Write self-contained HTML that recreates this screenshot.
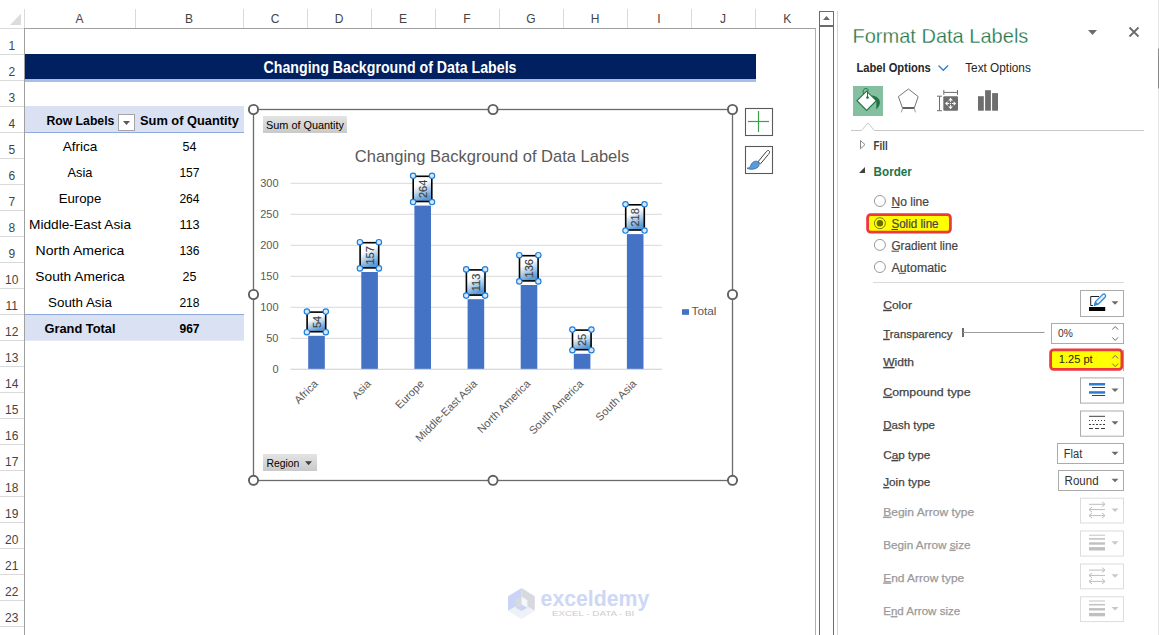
<!DOCTYPE html><html><head><meta charset="utf-8"><style>html,body{margin:0;padding:0;background:#fff;width:1159px;height:635px;overflow:hidden}svg{display:block}text{font-family:"Liberation Sans",sans-serif}</style></head><body>
<svg width="1159" height="635" viewBox="0 0 1159 635">
<rect width="1159" height="635" fill="#fff"/>
<polygon points="10,25 21,13.5 21,25" fill="#dcdcdc"/>
<line x1="135.5" y1="9" x2="135.5" y2="28" stroke="#dadada" stroke-width="1"/>
<line x1="243.5" y1="9" x2="243.5" y2="28" stroke="#dadada" stroke-width="1"/>
<line x1="307.5" y1="9" x2="307.5" y2="28" stroke="#dadada" stroke-width="1"/>
<line x1="371.5" y1="9" x2="371.5" y2="28" stroke="#dadada" stroke-width="1"/>
<line x1="435.5" y1="9" x2="435.5" y2="28" stroke="#dadada" stroke-width="1"/>
<line x1="499.5" y1="9" x2="499.5" y2="28" stroke="#dadada" stroke-width="1"/>
<line x1="563.5" y1="9" x2="563.5" y2="28" stroke="#dadada" stroke-width="1"/>
<line x1="627.5" y1="9" x2="627.5" y2="28" stroke="#dadada" stroke-width="1"/>
<line x1="691.5" y1="9" x2="691.5" y2="28" stroke="#dadada" stroke-width="1"/>
<line x1="755.5" y1="9" x2="755.5" y2="28" stroke="#dadada" stroke-width="1"/>
<text x="79.5" y="23.4" font-size="12" fill="#444" text-anchor="middle">A</text>
<text x="189.0" y="23.4" font-size="12" fill="#444" text-anchor="middle">B</text>
<text x="275.0" y="23.4" font-size="12" fill="#444" text-anchor="middle">C</text>
<text x="339.0" y="23.4" font-size="12" fill="#444" text-anchor="middle">D</text>
<text x="403.0" y="23.4" font-size="12" fill="#444" text-anchor="middle">E</text>
<text x="467.0" y="23.4" font-size="12" fill="#444" text-anchor="middle">F</text>
<text x="531.0" y="23.4" font-size="12" fill="#444" text-anchor="middle">G</text>
<text x="595.0" y="23.4" font-size="12" fill="#444" text-anchor="middle">H</text>
<text x="659.0" y="23.4" font-size="12" fill="#444" text-anchor="middle">I</text>
<text x="723.0" y="23.4" font-size="12" fill="#444" text-anchor="middle">J</text>
<text x="787.3" y="23.4" font-size="12" fill="#444" text-anchor="middle">K</text>
<line x1="0" y1="28.5" x2="24" y2="28.5" stroke="#dadada"/>
<line x1="24" y1="28.5" x2="816" y2="28.5" stroke="#a0a0a0"/>
<line x1="24.5" y1="9" x2="24.5" y2="28" stroke="#dadada"/>
<line x1="24.5" y1="28" x2="24.5" y2="635" stroke="#a0a0a0"/>
<line x1="815.5" y1="28" x2="815.5" y2="635" stroke="#b0b0b0"/>
<line x1="0" y1="54.5" x2="24" y2="54.5" stroke="#dadada"/>
<text x="11.8" y="50" font-size="12" fill="#444" text-anchor="middle">1</text>
<line x1="0" y1="80.5" x2="24" y2="80.5" stroke="#dadada"/>
<text x="11.8" y="76" font-size="12" fill="#444" text-anchor="middle">2</text>
<line x1="0" y1="106.5" x2="24" y2="106.5" stroke="#dadada"/>
<text x="11.8" y="102" font-size="12" fill="#444" text-anchor="middle">3</text>
<line x1="0" y1="132.5" x2="24" y2="132.5" stroke="#dadada"/>
<text x="11.8" y="128" font-size="12" fill="#444" text-anchor="middle">4</text>
<line x1="0" y1="158.5" x2="24" y2="158.5" stroke="#dadada"/>
<text x="11.8" y="154" font-size="12" fill="#444" text-anchor="middle">5</text>
<line x1="0" y1="184.5" x2="24" y2="184.5" stroke="#dadada"/>
<text x="11.8" y="180" font-size="12" fill="#444" text-anchor="middle">6</text>
<line x1="0" y1="210.5" x2="24" y2="210.5" stroke="#dadada"/>
<text x="11.8" y="206" font-size="12" fill="#444" text-anchor="middle">7</text>
<line x1="0" y1="236.5" x2="24" y2="236.5" stroke="#dadada"/>
<text x="11.8" y="232" font-size="12" fill="#444" text-anchor="middle">8</text>
<line x1="0" y1="262.5" x2="24" y2="262.5" stroke="#dadada"/>
<text x="11.8" y="258" font-size="12" fill="#444" text-anchor="middle">9</text>
<line x1="0" y1="288.5" x2="24" y2="288.5" stroke="#dadada"/>
<text x="11.8" y="284" font-size="12" fill="#444" text-anchor="middle">10</text>
<line x1="0" y1="314.5" x2="24" y2="314.5" stroke="#dadada"/>
<text x="11.8" y="310" font-size="12" fill="#444" text-anchor="middle">11</text>
<line x1="0" y1="340.5" x2="24" y2="340.5" stroke="#dadada"/>
<text x="11.8" y="336" font-size="12" fill="#444" text-anchor="middle">12</text>
<line x1="0" y1="366.5" x2="24" y2="366.5" stroke="#dadada"/>
<text x="11.8" y="362" font-size="12" fill="#444" text-anchor="middle">13</text>
<line x1="0" y1="392.5" x2="24" y2="392.5" stroke="#dadada"/>
<text x="11.8" y="388" font-size="12" fill="#444" text-anchor="middle">14</text>
<line x1="0" y1="418.5" x2="24" y2="418.5" stroke="#dadada"/>
<text x="11.8" y="414" font-size="12" fill="#444" text-anchor="middle">15</text>
<line x1="0" y1="444.5" x2="24" y2="444.5" stroke="#dadada"/>
<text x="11.8" y="440" font-size="12" fill="#444" text-anchor="middle">16</text>
<line x1="0" y1="470.5" x2="24" y2="470.5" stroke="#dadada"/>
<text x="11.8" y="466" font-size="12" fill="#444" text-anchor="middle">17</text>
<line x1="0" y1="496.5" x2="24" y2="496.5" stroke="#dadada"/>
<text x="11.8" y="492" font-size="12" fill="#444" text-anchor="middle">18</text>
<line x1="0" y1="522.5" x2="24" y2="522.5" stroke="#dadada"/>
<text x="11.8" y="518" font-size="12" fill="#444" text-anchor="middle">19</text>
<line x1="0" y1="548.5" x2="24" y2="548.5" stroke="#dadada"/>
<text x="11.8" y="544" font-size="12" fill="#444" text-anchor="middle">20</text>
<line x1="0" y1="574.5" x2="24" y2="574.5" stroke="#dadada"/>
<text x="11.8" y="570" font-size="12" fill="#444" text-anchor="middle">21</text>
<line x1="0" y1="600.5" x2="24" y2="600.5" stroke="#dadada"/>
<text x="11.8" y="596" font-size="12" fill="#444" text-anchor="middle">22</text>
<line x1="0" y1="626.5" x2="24" y2="626.5" stroke="#dadada"/>
<text x="11.8" y="622" font-size="12" fill="#444" text-anchor="middle">23</text>
<rect x="25" y="54" width="731" height="25" fill="#002060"/>
<rect x="25" y="79" width="731" height="3" fill="#a9bde5"/>
<text x="390" y="72.8" font-size="16" fill="#fff" font-weight="bold" text-anchor="middle" textLength="253" lengthAdjust="spacingAndGlyphs">Changing Background of Data Labels</text>
<rect x="25" y="106" width="219" height="26" fill="#d9e1f2"/>
<line x1="25" y1="132.5" x2="244" y2="132.5" stroke="#8ea9db"/>
<text x="46.4" y="124.8" font-size="13" fill="#000" font-weight="bold" textLength="68" lengthAdjust="spacingAndGlyphs">Row Labels</text>
<rect x="118.5" y="114.5" width="16" height="16" fill="#fff" stroke="#a6a6a6"/>
<polygon points="123,121 130,121 126.5,125" fill="#595959"/>
<text x="140" y="124.8" font-size="13" fill="#000" font-weight="bold" textLength="99" lengthAdjust="spacingAndGlyphs">Sum of Quantity</text>
<text x="80" y="150.5" font-size="13.5" fill="#000" text-anchor="middle" textLength="34.7" lengthAdjust="spacingAndGlyphs">Africa</text>
<text x="189.5" y="150.5" font-size="13.5" fill="#000" text-anchor="middle" textLength="13.9" lengthAdjust="spacingAndGlyphs">54</text>
<text x="80" y="176.5" font-size="13.5" fill="#000" text-anchor="middle" textLength="24.9" lengthAdjust="spacingAndGlyphs">Asia</text>
<text x="189.5" y="176.5" font-size="13.5" fill="#000" text-anchor="middle" textLength="20.2" lengthAdjust="spacingAndGlyphs">157</text>
<text x="80" y="202.5" font-size="13.5" fill="#000" text-anchor="middle" textLength="42.6" lengthAdjust="spacingAndGlyphs">Europe</text>
<text x="189.5" y="202.5" font-size="13.5" fill="#000" text-anchor="middle" textLength="20.2" lengthAdjust="spacingAndGlyphs">264</text>
<text x="80" y="228.5" font-size="13.5" fill="#000" text-anchor="middle" textLength="102" lengthAdjust="spacingAndGlyphs">Middle-East Asia</text>
<text x="189.5" y="228.5" font-size="13.5" fill="#000" text-anchor="middle" textLength="20.2" lengthAdjust="spacingAndGlyphs">113</text>
<text x="80" y="254.5" font-size="13.5" fill="#000" text-anchor="middle" textLength="88.8" lengthAdjust="spacingAndGlyphs">North America</text>
<text x="189.5" y="254.5" font-size="13.5" fill="#000" text-anchor="middle" textLength="20.2" lengthAdjust="spacingAndGlyphs">136</text>
<text x="80" y="280.5" font-size="13.5" fill="#000" text-anchor="middle" textLength="89.3" lengthAdjust="spacingAndGlyphs">South America</text>
<text x="189.5" y="280.5" font-size="13.5" fill="#000" text-anchor="middle" textLength="13.9" lengthAdjust="spacingAndGlyphs">25</text>
<text x="80" y="306.5" font-size="13.5" fill="#000" text-anchor="middle" textLength="63.9" lengthAdjust="spacingAndGlyphs">South Asia</text>
<text x="189.5" y="306.5" font-size="13.5" fill="#000" text-anchor="middle" textLength="20.2" lengthAdjust="spacingAndGlyphs">218</text>
<rect x="25" y="314" width="219" height="26.7" fill="#d9e1f2"/>
<line x1="25" y1="314.5" x2="244" y2="314.5" stroke="#8ea9db"/>
<text x="80" y="332.7" font-size="13" fill="#000" font-weight="bold" text-anchor="middle" textLength="71" lengthAdjust="spacingAndGlyphs">Grand Total</text>
<text x="189.5" y="332.7" font-size="13" fill="#000" font-weight="bold" text-anchor="middle" textLength="20.1" lengthAdjust="spacingAndGlyphs">967</text>
<rect x="253.5" y="109.5" width="479" height="371" fill="#fff" stroke="#6b6b6b" stroke-width="1.3"/>
<defs><linearGradient id="btn" x1="0" y1="0" x2="0" y2="1"><stop offset="0" stop-color="#e4e4e4"/><stop offset="1" stop-color="#c9c9c9"/></linearGradient><linearGradient id="lbl" x1="0" y1="0" x2="0.35" y2="1"><stop offset="0.4" stop-color="#ffffff"/><stop offset="1" stop-color="#5b9bd5"/></linearGradient></defs>
<rect x="263" y="116" width="84" height="17" fill="url(#btn)"/>
<text x="266" y="128.5" font-size="11" fill="#000" textLength="78" lengthAdjust="spacingAndGlyphs">Sum of Quantity</text>
<text x="492" y="162" font-size="17" fill="#595959" text-anchor="middle" textLength="274.4" lengthAdjust="spacingAndGlyphs">Changing Background of Data Labels</text>
<line x1="290.5" y1="369.3" x2="662" y2="369.3" stroke="#d9d9d9" stroke-width="1"/>
<text x="278.5" y="373.3" font-size="11" fill="#595959" text-anchor="end">0</text>
<line x1="290.5" y1="338.3" x2="662" y2="338.3" stroke="#d9d9d9" stroke-width="1"/>
<text x="278.5" y="342.3" font-size="11" fill="#595959" text-anchor="end">50</text>
<line x1="290.5" y1="307.3" x2="662" y2="307.3" stroke="#d9d9d9" stroke-width="1"/>
<text x="278.5" y="311.3" font-size="11" fill="#595959" text-anchor="end">100</text>
<line x1="290.5" y1="276.3" x2="662" y2="276.3" stroke="#d9d9d9" stroke-width="1"/>
<text x="278.5" y="280.3" font-size="11" fill="#595959" text-anchor="end">150</text>
<line x1="290.5" y1="245.3" x2="662" y2="245.3" stroke="#d9d9d9" stroke-width="1"/>
<text x="278.5" y="249.3" font-size="11" fill="#595959" text-anchor="end">200</text>
<line x1="290.5" y1="214.3" x2="662" y2="214.3" stroke="#d9d9d9" stroke-width="1"/>
<text x="278.5" y="218.3" font-size="11" fill="#595959" text-anchor="end">250</text>
<line x1="290.5" y1="183.3" x2="662" y2="183.3" stroke="#d9d9d9" stroke-width="1"/>
<text x="278.5" y="187.3" font-size="11" fill="#595959" text-anchor="end">300</text>
<rect x="308.2" y="335.8" width="16.6" height="33.5" fill="#4472c4"/>
<rect x="361.3" y="272.0" width="16.6" height="97.3" fill="#4472c4"/>
<rect x="414.4" y="205.6" width="16.6" height="163.7" fill="#4472c4"/>
<rect x="467.6" y="299.2" width="16.6" height="70.1" fill="#4472c4"/>
<rect x="520.7" y="285.0" width="16.6" height="84.3" fill="#4472c4"/>
<rect x="573.8" y="353.8" width="16.6" height="15.5" fill="#4472c4"/>
<rect x="626.9" y="234.1" width="16.6" height="135.2" fill="#4472c4"/>
<line x1="290.5" y1="369.3" x2="662" y2="369.3" stroke="#d9d9d9" stroke-width="1"/>
<rect x="307.1" y="312.1" width="18.6" height="19.6" fill="url(#lbl)" stroke="#000" stroke-width="1.6"/>
<text x="320.6" y="321.9" font-size="11" fill="#404040" stroke="#404040" stroke-width="0.15" text-anchor="middle" transform="rotate(-90 320.6 321.9)">54</text>
<circle cx="306.9" cy="311.6" r="2.7" fill="#d6e6f7" stroke="#1a7fe0" stroke-width="1.15"/>
<circle cx="306.9" cy="332.2" r="2.7" fill="#d6e6f7" stroke="#1a7fe0" stroke-width="1.15"/>
<circle cx="325.8" cy="311.6" r="2.7" fill="#d6e6f7" stroke="#1a7fe0" stroke-width="1.15"/>
<circle cx="325.8" cy="332.2" r="2.7" fill="#d6e6f7" stroke="#1a7fe0" stroke-width="1.15"/>
<rect x="360.1" y="242.7" width="18.6" height="25.2" fill="url(#lbl)" stroke="#000" stroke-width="1.6"/>
<text x="373.6" y="255.3" font-size="11" fill="#404040" stroke="#404040" stroke-width="0.15" text-anchor="middle" transform="rotate(-90 373.6 255.3)">157</text>
<circle cx="359.9" cy="242.2" r="2.7" fill="#d6e6f7" stroke="#1a7fe0" stroke-width="1.15"/>
<circle cx="359.9" cy="268.4" r="2.7" fill="#d6e6f7" stroke="#1a7fe0" stroke-width="1.15"/>
<circle cx="378.9" cy="242.2" r="2.7" fill="#d6e6f7" stroke="#1a7fe0" stroke-width="1.15"/>
<circle cx="378.9" cy="268.4" r="2.7" fill="#d6e6f7" stroke="#1a7fe0" stroke-width="1.15"/>
<rect x="413.2" y="176.3" width="18.6" height="25.2" fill="url(#lbl)" stroke="#000" stroke-width="1.6"/>
<text x="426.8" y="188.9" font-size="11" fill="#404040" stroke="#404040" stroke-width="0.15" text-anchor="middle" transform="rotate(-90 426.8 188.9)">264</text>
<circle cx="413.1" cy="175.8" r="2.7" fill="#d6e6f7" stroke="#1a7fe0" stroke-width="1.15"/>
<circle cx="413.1" cy="202.0" r="2.7" fill="#d6e6f7" stroke="#1a7fe0" stroke-width="1.15"/>
<circle cx="432.0" cy="175.8" r="2.7" fill="#d6e6f7" stroke="#1a7fe0" stroke-width="1.15"/>
<circle cx="432.0" cy="202.0" r="2.7" fill="#d6e6f7" stroke="#1a7fe0" stroke-width="1.15"/>
<rect x="466.4" y="269.9" width="18.6" height="25.2" fill="url(#lbl)" stroke="#000" stroke-width="1.6"/>
<text x="479.9" y="282.5" font-size="11" fill="#404040" stroke="#404040" stroke-width="0.15" text-anchor="middle" transform="rotate(-90 479.9 282.5)">113</text>
<circle cx="466.2" cy="269.4" r="2.7" fill="#d6e6f7" stroke="#1a7fe0" stroke-width="1.15"/>
<circle cx="466.2" cy="295.6" r="2.7" fill="#d6e6f7" stroke="#1a7fe0" stroke-width="1.15"/>
<circle cx="485.1" cy="269.4" r="2.7" fill="#d6e6f7" stroke="#1a7fe0" stroke-width="1.15"/>
<circle cx="485.1" cy="295.6" r="2.7" fill="#d6e6f7" stroke="#1a7fe0" stroke-width="1.15"/>
<rect x="519.5" y="255.7" width="18.6" height="25.2" fill="url(#lbl)" stroke="#000" stroke-width="1.6"/>
<text x="533.0" y="268.3" font-size="11" fill="#404040" stroke="#404040" stroke-width="0.15" text-anchor="middle" transform="rotate(-90 533.0 268.3)">136</text>
<circle cx="519.3" cy="255.2" r="2.7" fill="#d6e6f7" stroke="#1a7fe0" stroke-width="1.15"/>
<circle cx="519.3" cy="281.4" r="2.7" fill="#d6e6f7" stroke="#1a7fe0" stroke-width="1.15"/>
<circle cx="538.3" cy="255.2" r="2.7" fill="#d6e6f7" stroke="#1a7fe0" stroke-width="1.15"/>
<circle cx="538.3" cy="281.4" r="2.7" fill="#d6e6f7" stroke="#1a7fe0" stroke-width="1.15"/>
<rect x="572.5" y="330.1" width="18.6" height="19.6" fill="url(#lbl)" stroke="#000" stroke-width="1.6"/>
<text x="586.0" y="339.9" font-size="11" fill="#404040" stroke="#404040" stroke-width="0.15" text-anchor="middle" transform="rotate(-90 586.0 339.9)">25</text>
<circle cx="572.4" cy="329.6" r="2.7" fill="#d6e6f7" stroke="#1a7fe0" stroke-width="1.15"/>
<circle cx="572.4" cy="350.2" r="2.7" fill="#d6e6f7" stroke="#1a7fe0" stroke-width="1.15"/>
<circle cx="591.4" cy="329.6" r="2.7" fill="#d6e6f7" stroke="#1a7fe0" stroke-width="1.15"/>
<circle cx="591.4" cy="350.2" r="2.7" fill="#d6e6f7" stroke="#1a7fe0" stroke-width="1.15"/>
<rect x="625.7" y="204.8" width="18.6" height="25.2" fill="url(#lbl)" stroke="#000" stroke-width="1.6"/>
<text x="639.2" y="217.4" font-size="11" fill="#404040" stroke="#404040" stroke-width="0.15" text-anchor="middle" transform="rotate(-90 639.2 217.4)">218</text>
<circle cx="625.5" cy="204.3" r="2.7" fill="#d6e6f7" stroke="#1a7fe0" stroke-width="1.15"/>
<circle cx="625.5" cy="230.5" r="2.7" fill="#d6e6f7" stroke="#1a7fe0" stroke-width="1.15"/>
<circle cx="644.5" cy="204.3" r="2.7" fill="#d6e6f7" stroke="#1a7fe0" stroke-width="1.15"/>
<circle cx="644.5" cy="230.5" r="2.7" fill="#d6e6f7" stroke="#1a7fe0" stroke-width="1.15"/>
<text x="318.6" y="384.5" font-size="11" fill="#595959" text-anchor="end" transform="rotate(-45 318.6 384.5)">Africa</text>
<text x="371.6" y="384.5" font-size="11" fill="#595959" text-anchor="end" transform="rotate(-45 371.6 384.5)">Asia</text>
<text x="424.8" y="384.5" font-size="11" fill="#595959" text-anchor="end" transform="rotate(-45 424.8 384.5)">Europe</text>
<text x="477.9" y="384.5" font-size="11" fill="#595959" text-anchor="end" transform="rotate(-45 477.9 384.5)">Middle-East Asia</text>
<text x="531.0" y="384.5" font-size="11" fill="#595959" text-anchor="end" transform="rotate(-45 531.0 384.5)">North America</text>
<text x="584.0" y="384.5" font-size="11" fill="#595959" text-anchor="end" transform="rotate(-45 584.0 384.5)">South America</text>
<text x="637.2" y="384.5" font-size="11" fill="#595959" text-anchor="end" transform="rotate(-45 637.2 384.5)">South Asia</text>
<rect x="682" y="309.2" width="7" height="5.6" fill="#4472c4"/>
<text x="691.5" y="315" font-size="11" fill="#595959" textLength="24.9" lengthAdjust="spacingAndGlyphs">Total</text>
<rect x="263" y="454" width="54" height="17" fill="url(#btn)"/>
<text x="266.4" y="466.8" font-size="11" fill="#000" textLength="33" lengthAdjust="spacingAndGlyphs">Region</text>
<polygon points="305,461.2 312,461.2 308.5,465.2" fill="#404040"/>
<circle cx="253.5" cy="109.5" r="4.6" fill="#fff" stroke="#5f5f5f" stroke-width="1.9"/>
<circle cx="253.5" cy="294.5" r="4.6" fill="#fff" stroke="#5f5f5f" stroke-width="1.9"/>
<circle cx="253.5" cy="480.3" r="4.6" fill="#fff" stroke="#5f5f5f" stroke-width="1.9"/>
<circle cx="493" cy="109.5" r="4.6" fill="#fff" stroke="#5f5f5f" stroke-width="1.9"/>
<circle cx="493" cy="480.3" r="4.6" fill="#fff" stroke="#5f5f5f" stroke-width="1.9"/>
<circle cx="732.5" cy="109.5" r="4.6" fill="#fff" stroke="#5f5f5f" stroke-width="1.9"/>
<circle cx="732.5" cy="294.5" r="4.6" fill="#fff" stroke="#5f5f5f" stroke-width="1.9"/>
<circle cx="732.5" cy="480.3" r="4.6" fill="#fff" stroke="#5f5f5f" stroke-width="1.9"/>
<rect x="745.5" y="108.5" width="27" height="27" fill="#fff" stroke="#5a5a5a" stroke-width="1.1"/>
<line x1="748" y1="121.5" x2="769" y2="121.5" stroke="#3aa04a" stroke-width="1.2"/>
<line x1="758.5" y1="111" x2="758.5" y2="132" stroke="#3aa04a" stroke-width="1.2"/>
<rect x="745.5" y="146.5" width="27" height="27" fill="#fff" stroke="#5a5a5a" stroke-width="1.1"/>
<path d="M768.8,150.6 C770.2,151.4 769.6,153 768.4,154.4 L760.5,163.8 L758,161.8 L766.2,151.8 C767,150.8 768,150.2 768.8,150.6 Z" fill="#fff" stroke="#404040" stroke-width="1"/>
<path d="M757.5,161.5 C755,160.5 752,162 751,165 C750.5,167 749,168 747,168.2 C750,170 755.5,169.5 758,167 C759.5,165.5 759.8,163 757.5,161.5 Z" fill="#5b9bd5" stroke="#2f6fb8" stroke-width="0.9"/>
<polygon points="508,596.2 521.6,588 521.6,603.5 508,610.7" fill="#cad5f6"/>
<polygon points="521.6,588 534.8,596.2 534.8,610.7 521.6,603.5" fill="#d6d9de"/>
<polygon points="508,610.7 521.6,603.5 534.8,610.7 521.6,619.2" fill="#eef1f6"/>
<polygon points="515.9,600 521.6,596.8 521.6,604.5 515.9,607.7" fill="#d6d9de"/>
<polygon points="521.6,596.8 527.3,600 527.3,607.7 521.6,604.5" fill="#f6f7fa"/>
<polygon points="515.9,607.7 521.6,604.5 527.3,607.7 521.6,610.9" fill="#cad5f6"/>
<text x="540.6" y="606.2" font-size="22" fill="#cdd8f5" font-weight="bold" textLength="108.7" lengthAdjust="spacingAndGlyphs">exceldemy</text>
<text x="552" y="615.8" font-size="7.6" fill="#cccccc" textLength="82.3" lengthAdjust="spacingAndGlyphs">EXCEL - DATA - BI</text>
<rect x="819.5" y="11.5" width="14" height="640" fill="#fff" stroke="#6b6b6b" stroke-width="1"/>
<rect x="820" y="25" width="13" height="2" fill="#6b6b6b"/>
<polygon points="823,20 830,20 826.5,16" fill="#6b6b6b"/>
<line x1="837.5" y1="11" x2="837.5" y2="635" stroke="#d4d4d4"/>
<text x="852.4" y="42.5" font-size="21" fill="#217346" textLength="176" lengthAdjust="spacingAndGlyphs" stroke="#fff" stroke-width="0.3">Format Data Labels</text>
<polygon points="1088,30 1097,30 1092.5,35" fill="#6b6b6b"/>
<path d="M1129.5,27.5 L1138.5,36.5 M1138.5,27.5 L1129.5,36.5" stroke="#6b6b6b" stroke-width="1.8"/>
<line x1="1158.5" y1="0" x2="1158.5" y2="635" stroke="#e6e6e6"/>
<rect x="1158" y="48.5" width="1" height="40" fill="#8a8a8a"/>
<text x="856.5" y="72.3" font-size="13" fill="#262626" font-weight="bold" textLength="74.3" lengthAdjust="spacingAndGlyphs">Label Options</text>
<path d="M938.5,65.5 L943.3,70.3 L948.1,65.5" fill="none" stroke="#2b7cd3" stroke-width="1.3"/>
<text x="965.2" y="72.3" font-size="13" fill="#262626" textLength="65.6" lengthAdjust="spacingAndGlyphs">Text Options</text>
<rect x="853" y="86" width="30" height="30" fill="#84c0a0"/>
<polygon points="857,100.7 866.6,91.2 876.3,100.7 866.6,110.4" fill="#fff" stroke="#217346" stroke-width="1.1"/>
<path d="M863.5,94 C862.5,90 864,88.5 866,88.5 C868,88.5 868.5,90 867.5,92 L867.5,97.5" fill="none" stroke="#217346" stroke-width="1"/>
<circle cx="867.5" cy="97.6" r="1.3" fill="#217346"/>
<path d="M871.5,95.3 C876.5,96 880.8,99.5 879.8,103.5 C879.3,105.8 877.8,107.8 876.4,109.8 L876.3,100.7 Z" fill="#217346"/>
<polygon points="908.4,89 918.2,96.6 914.3,108 902.5,108 898.4,96.6" fill="none" stroke="#767676" stroke-width="1"/>
<line x1="902.5" y1="108" x2="914.3" y2="108" stroke="#616161" stroke-width="2"/>
<path d="M902.5,108.5 L901.3,112.4 M914.3,108.5 L915.5,112.4" stroke="#9a9a9a" stroke-width="1"/>
<rect x="943.3" y="96.2" width="14.7" height="14.5" rx="1" fill="#6e6e6e"/>
<path d="M943.8,92.4 H957.5 M943.8,90 V94.8 M957.5,90 V94.8 M939.5,96.2 V110.7 M937,96.2 H942 M937,110.7 H942" stroke="#6e6e6e" stroke-width="1"/>
<g fill="#fff"><polygon points="950.6,97.8 948.3,100.4 952.9,100.4"/><rect x="950.1" y="100.3" width="1" height="1.8"/><polygon points="950.6,109.2 948.3,106.6 952.9,106.6"/><rect x="950.1" y="104.9" width="1" height="1.8"/><polygon points="945,103.5 947.6,101.2 947.6,105.8"/><rect x="947.5" y="103" width="1.7" height="1"/><polygon points="956.2,103.5 953.6,101.2 953.6,105.8"/><rect x="952" y="103" width="1.7" height="1"/><rect x="950.1" y="103" width="1" height="1"/></g>
<rect x="978" y="96.2" width="5.8" height="14.5" fill="#6e6e6e"/>
<rect x="985.1" y="90.2" width="5.8" height="20.5" fill="#6e6e6e"/>
<rect x="992.1" y="93.1" width="5.9" height="17.6" fill="#6e6e6e"/>
<path d="M851,130.5 H861.4 L868,123 L874.3,130.5 H1144" fill="none" stroke="#c8c8c8" stroke-width="1"/>
<polygon points="860.5,140.5 865,144.6 860.5,148.7" fill="none" stroke="#7a7a7a" stroke-width="0.9"/>
<text x="873.6" y="149.8" font-size="12" fill="#404040" font-weight="bold" textLength="14.1" lengthAdjust="spacingAndGlyphs">Fill</text>
<polygon points="859,173 865,167 865,173" fill="#404040"/>
<text x="873.6" y="175.8" font-size="12" fill="#217346" font-weight="bold" textLength="38.2" lengthAdjust="spacingAndGlyphs">Border</text>
<rect x="867.6" y="214.7" width="82.8" height="17.4" rx="3" fill="#ffff00" stroke="#ea3a3d" stroke-width="2.8"/>
<circle cx="879.9" cy="201" r="5.5" fill="#fff" stroke="#9a9a9a" stroke-width="1"/>
<text x="891.4" y="205.6" font-size="12" fill="#444" textLength="37.7" lengthAdjust="spacingAndGlyphs" stroke="#444" stroke-width="0.2">No line</text>
<circle cx="879.9" cy="223.2" r="5.5" fill="#ffff00" stroke="#7a7a20" stroke-width="1"/>
<text x="891.4" y="227.79999999999998" font-size="12" fill="#444" textLength="47.2" lengthAdjust="spacingAndGlyphs" stroke="#444" stroke-width="0.2">Solid line</text>
<circle cx="879.9" cy="244.9" r="5.5" fill="#fff" stroke="#9a9a9a" stroke-width="1"/>
<text x="891.4" y="249.5" font-size="12" fill="#444" textLength="66.6" lengthAdjust="spacingAndGlyphs" stroke="#444" stroke-width="0.2">Gradient line</text>
<circle cx="879.9" cy="267" r="5.5" fill="#fff" stroke="#9a9a9a" stroke-width="1"/>
<text x="891.4" y="271.6" font-size="12" fill="#444" textLength="55.1" lengthAdjust="spacingAndGlyphs" stroke="#444" stroke-width="0.2">Automatic</text>
<circle cx="879.9" cy="223.2" r="3.2" fill="#6b6b00"/>
<rect x="879.9" y="217.7" width="0" height="0"/>
<line x1="891.4" y1="207.5" x2="899.5" y2="207.5" stroke="#444" stroke-width="1"/>
<line x1="891.4" y1="229.5" x2="898" y2="229.5" stroke="#444" stroke-width="1"/>
<line x1="891.4" y1="251.2" x2="899" y2="251.2" stroke="#444" stroke-width="1"/>
<line x1="899" y1="273.3" x2="905.5" y2="273.3" stroke="#444" stroke-width="1"/>
<line x1="873" y1="282.5" x2="1124" y2="282.5" stroke="#dadada"/>
<text x="883.2" y="308.9" font-size="11.5" fill="#444" textLength="28.7" lengthAdjust="spacingAndGlyphs" stroke="#444" stroke-width="0.25"><tspan style="text-decoration:underline">C</tspan>olor</text>
<text x="883.2" y="337.9" font-size="11.5" fill="#444" textLength="69.3" lengthAdjust="spacingAndGlyphs" stroke="#444" stroke-width="0.25"><tspan style="text-decoration:underline">T</tspan>ransparency</text>
<text x="883.2" y="366" font-size="11.5" fill="#444" textLength="30.8" lengthAdjust="spacingAndGlyphs" stroke="#444" stroke-width="0.25"><tspan style="text-decoration:underline">W</tspan>idth</text>
<text x="883.2" y="395.8" font-size="11.5" fill="#444" textLength="87.4" lengthAdjust="spacingAndGlyphs" stroke="#444" stroke-width="0.25"><tspan style="text-decoration:underline">C</tspan>ompound type</text>
<text x="883.2" y="428.8" font-size="11.5" fill="#444" textLength="51.8" lengthAdjust="spacingAndGlyphs" stroke="#444" stroke-width="0.25"><tspan style="text-decoration:underline">D</tspan>ash type</text>
<text x="883.2" y="459" font-size="11.5" fill="#444" textLength="47" lengthAdjust="spacingAndGlyphs" stroke="#444" stroke-width="0.25">C<tspan style="text-decoration:underline">a</tspan>p type</text>
<text x="883.2" y="486.1" font-size="11.5" fill="#444" textLength="47" lengthAdjust="spacingAndGlyphs" stroke="#444" stroke-width="0.25"><tspan style="text-decoration:underline">J</tspan>oin type</text>
<text x="883.2" y="515.8" font-size="11.5" fill="#9a9a9a" textLength="91" lengthAdjust="spacingAndGlyphs" stroke="#9a9a9a" stroke-width="0.25"><tspan style="text-decoration:underline">B</tspan>egin Arrow type</text>
<text x="883.2" y="548.8" font-size="11.5" fill="#9a9a9a" textLength="87.4" lengthAdjust="spacingAndGlyphs" stroke="#9a9a9a" stroke-width="0.25">Begin Arrow <tspan style="text-decoration:underline">s</tspan>ize</text>
<text x="883.2" y="581.6" font-size="11.5" fill="#9a9a9a" textLength="81" lengthAdjust="spacingAndGlyphs" stroke="#9a9a9a" stroke-width="0.25"><tspan style="text-decoration:underline">E</tspan>nd Arrow type</text>
<text x="883.2" y="615.1" font-size="11.5" fill="#9a9a9a" textLength="77" lengthAdjust="spacingAndGlyphs" stroke="#9a9a9a" stroke-width="0.25">E<tspan style="text-decoration:underline">n</tspan>d Arrow size</text>
<rect x="1080.5" y="290.5" width="43.0" height="26" fill="#fff" stroke="#ababab"/>
<path d="M1093,305.5 H1090.7 V296.5 H1099" fill="none" stroke="#222" stroke-width="1"/>
<path d="M1094.3,305.4 L1095.5,301.6 L1102.5,294.6 Q1104.3,293.1 1105.1,294.6 Q1106.3,295.8 1105.1,297.2 L1098.1,304.2 Z" fill="#e6f0fa" stroke="#2b88d8" stroke-width="1.3" stroke-linejoin="round"/><path d="M1094.3,305.4 L1095.6,301.6 L1098.1,304.1 Z" fill="#2b88d8"/>
<rect x="1089" y="307" width="16.2" height="4" fill="#000"/>
<polygon points="1111.5,301.3 1118.5,301.3 1115,304.8" fill="#6b6b6b"/>
<rect x="962" y="328" width="2" height="9" fill="#6b6b6b"/>
<line x1="963" y1="332.5" x2="1044.5" y2="332.5" stroke="#9a9a9a"/>
<rect x="1051.5" y="323.5" width="72" height="20" fill="#fff" stroke="#ababab"/>
<text x="1058.1" y="336.8" font-size="10.8" fill="#333" textLength="14.8" lengthAdjust="spacingAndGlyphs">0%</text>
<path d="M1112.3,329.6 L1115.2,326.5 L1118.1,329.6 M1112.3,337.4 L1115.2,340.4 L1118.1,337.4" fill="none" stroke="#6b6b6b" stroke-width="1"/>
<line x1="1123.5" y1="350" x2="1123.5" y2="371" stroke="#ababab"/>
<rect x="1050.6" y="349.9" width="71.3" height="19.4" rx="3" fill="#ffff00" stroke="#ea3a3d" stroke-width="2.8"/>
<text x="1058.8" y="363.4" font-size="11" fill="#262600" textLength="33.9" lengthAdjust="spacingAndGlyphs">1.25 pt</text>
<path d="M1112.3,358.4 L1115.2,355.3 L1118.1,358.4 M1112.3,363.6 L1115.2,366.6 L1118.1,363.6" fill="none" stroke="#6b6b6b" stroke-width="1"/>
<rect x="1080.5" y="377.9" width="43.0" height="25.200000000000045" fill="#fff" stroke="#ababab"/>
<rect x="1089" y="383" width="16.1" height="2.5" fill="#2b7cd3"/>
<rect x="1092" y="387" width="13.1" height="1" fill="#404040"/>
<rect x="1089" y="391.2" width="16.1" height="2.5" fill="#2b7cd3"/>
<rect x="1092" y="395" width="13.1" height="1" fill="#404040"/>
<polygon points="1111.5,388.5 1118.5,388.5 1115,392.0" fill="#6b6b6b"/>
<rect x="1080.5" y="411.0" width="43.0" height="25.19999999999999" fill="#fff" stroke="#ababab"/>
<line x1="1089" y1="416.3" x2="1105" y2="416.3" stroke="#404040" stroke-width="1"/>
<line x1="1089" y1="420.5" x2="1105" y2="420.5" stroke="#404040" stroke-width="1" stroke-dasharray="1,2"/>
<line x1="1089" y1="424.5" x2="1105" y2="424.5" stroke="#404040" stroke-width="1" stroke-dasharray="2,1.5"/>
<line x1="1089" y1="428.5" x2="1105" y2="428.5" stroke="#404040" stroke-width="1" stroke-dasharray="4,2"/>
<polygon points="1111.5,421.3 1118.5,421.3 1115,424.8" fill="#6b6b6b"/>
<rect x="1057.5" y="443.5" width="66" height="20" fill="#fff" stroke="#ababab"/>
<text x="1063.8" y="458" font-size="12" fill="#333" textLength="18.5" lengthAdjust="spacingAndGlyphs">Flat</text>
<polygon points="1111.5,451.8 1118.5,451.8 1115,455.3" fill="#6b6b6b"/>
<rect x="1058.5" y="470.5" width="65" height="20" fill="#fff" stroke="#ababab"/>
<text x="1064.6" y="485" font-size="12" fill="#333" textLength="34" lengthAdjust="spacingAndGlyphs">Round</text>
<polygon points="1111.5,478.8 1118.5,478.8 1115,482.3" fill="#6b6b6b"/>
<rect x="1080.5" y="498.2" width="43" height="24.80000000000001" fill="#fff" stroke="#dcdcdc"/>
<polygon points="1111.5,508.5 1118.5,508.5 1115,512.0" fill="#c8c8c8"/>
<path d="M1089,504.3 H1105 M1102,501.8 L1105,504.3 L1102,506.8 M1089,509.59999999999997 H1105 M1092,507.09999999999997 L1089,509.59999999999997 L1092,512.0999999999999 M1089,515.6 H1105 M1092,513.1 L1089,515.6 L1092,518.1 M1102,513.1 L1105,515.6 L1102,518.1" fill="none" stroke="#bdbdbd" stroke-width="1"/>
<rect x="1080.5" y="531.0" width="43" height="25.100000000000023" fill="#fff" stroke="#dcdcdc"/>
<polygon points="1111.5,541.3 1118.5,541.3 1115,544.8" fill="#c8c8c8"/>
<rect x="1089" y="534.7" width="16" height="1" fill="#c4c4c4"/><rect x="1089" y="538.1" width="16" height="1.6" fill="#c4c4c4"/><rect x="1089" y="542.3" width="16" height="2.4" fill="#c0c0c0"/><rect x="1089" y="547.1" width="16" height="3.4" fill="#c0c0c0"/>
<rect x="1080.5" y="564.0" width="43" height="24.799999999999955" fill="#fff" stroke="#dcdcdc"/>
<polygon points="1111.5,574.3 1118.5,574.3 1115,577.8" fill="#c8c8c8"/>
<path d="M1089,570.1 H1105 M1102,567.6 L1105,570.1 L1102,572.6 M1089,575.4 H1105 M1092,572.9 L1089,575.4 L1092,577.9 M1089,581.4 H1105 M1092,578.9 L1089,581.4 L1092,583.9 M1102,578.9 L1105,581.4 L1102,583.9" fill="none" stroke="#bdbdbd" stroke-width="1"/>
<rect x="1080.5" y="596.8" width="43" height="24.800000000000068" fill="#fff" stroke="#dcdcdc"/>
<polygon points="1111.5,607.0999999999999 1118.5,607.0999999999999 1115,610.5999999999999" fill="#c8c8c8"/>
<rect x="1089" y="600.5" width="16" height="1" fill="#c4c4c4"/><rect x="1089" y="603.9" width="16" height="1.6" fill="#c4c4c4"/><rect x="1089" y="608.1" width="16" height="2.4" fill="#c0c0c0"/><rect x="1089" y="612.9" width="16" height="3.4" fill="#c0c0c0"/>
</svg></body></html>
